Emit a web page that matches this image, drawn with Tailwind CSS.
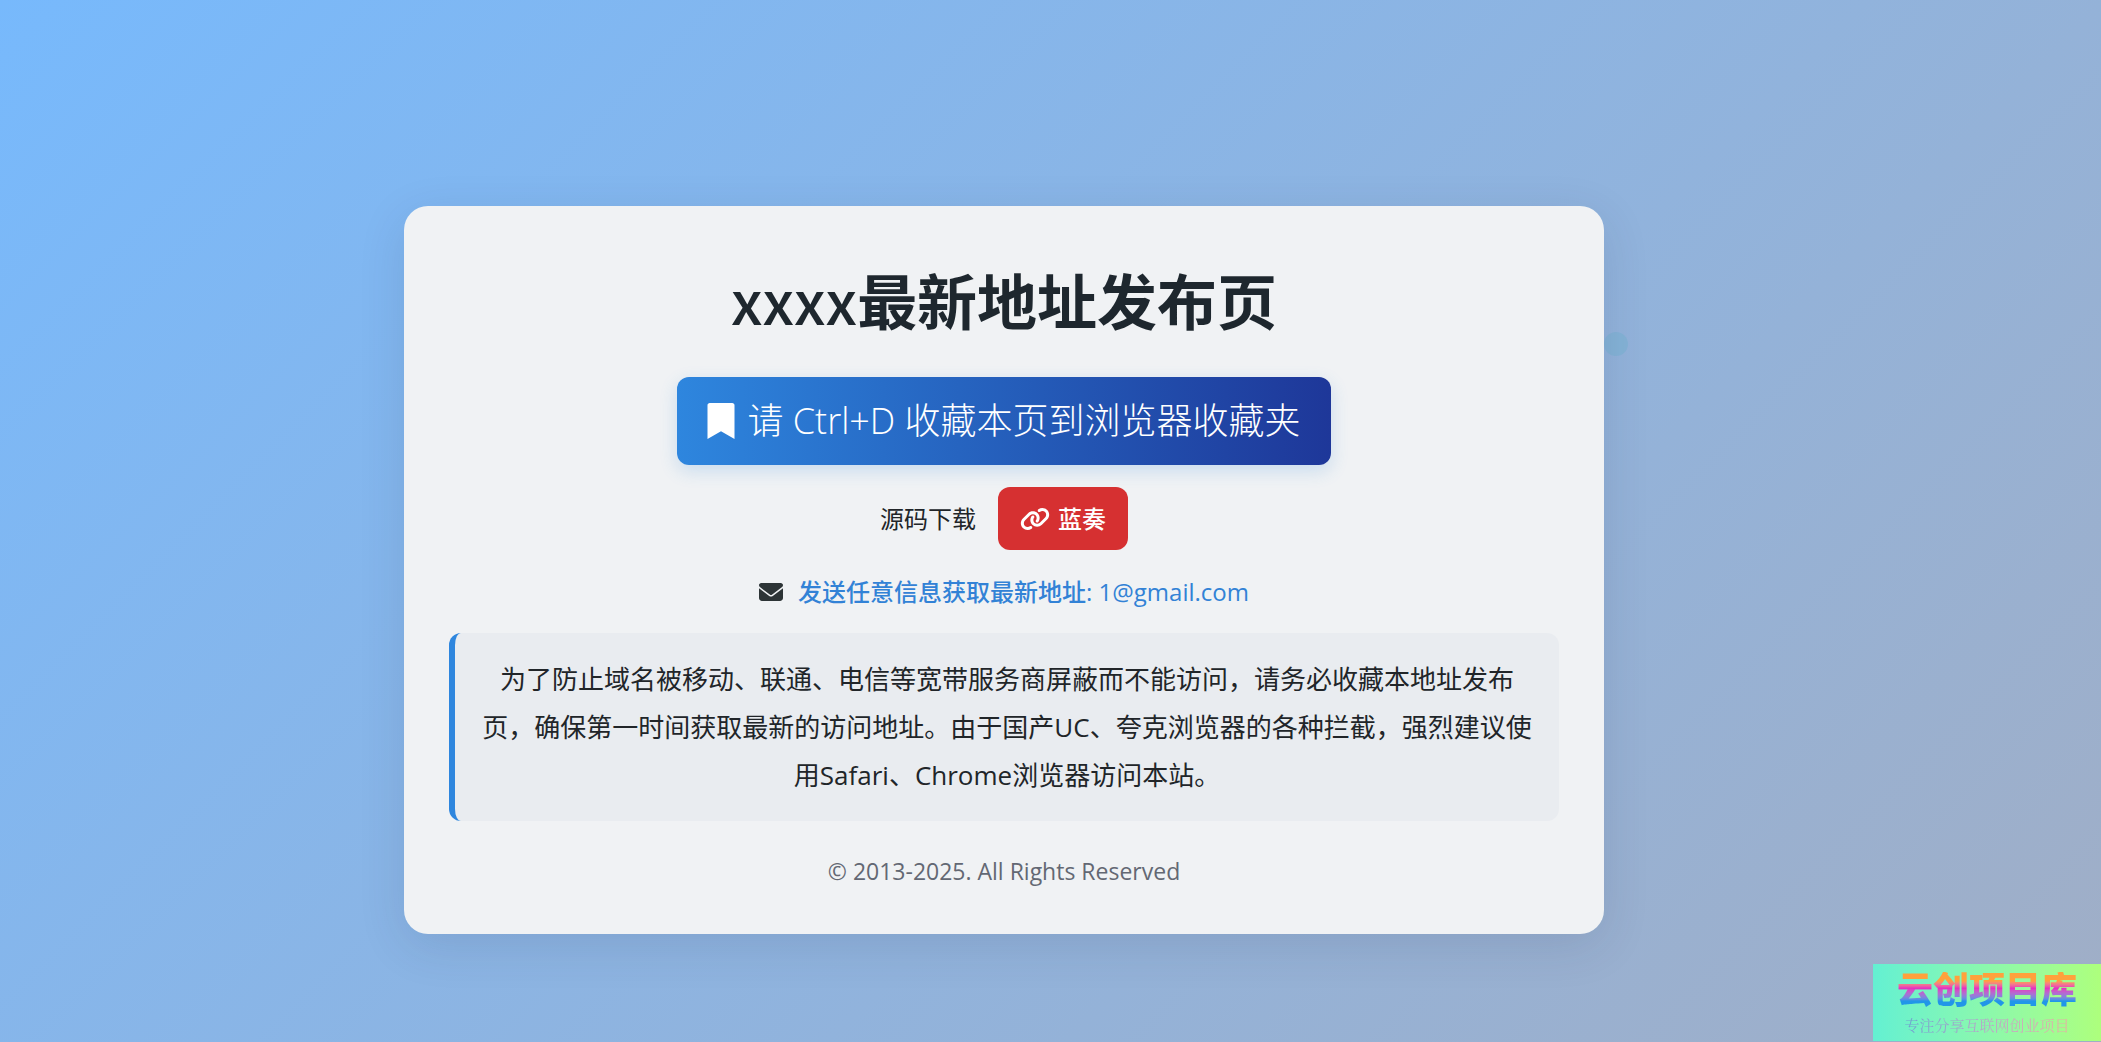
<!DOCTYPE html>
<html lang="zh-CN">

<head>
  <meta charset="UTF-8" />
  <meta name="viewport" content="width=device-width, initial-scale=1.0" />
  <title>xxxx最新地址发布页</title>
  <script src="https://cdn.jsdelivr.net/npm/@tailwindcss/browser@4"></script>
</head>

<body class="relative min-h-screen overflow-x-hidden bg-linear-135 from-[#77b9fc] to-[#a0aec6] pt-[206px] pr-[93px] pb-[108px] font-['Open_Sans','Noto_Sans_CJK_SC',sans-serif] text-2xl text-[#212529]">

  <!-- Floating particle -->
  <span class="absolute left-[1604px] top-[332px] size-6 rounded-full bg-[#84b2d6]"></span>

  <!-- Card -->
  <main class="relative mx-auto w-full max-w-[1200px] rounded-3xl bg-[#f0f2f4] p-[45px] text-center shadow-[0_12px_48px_rgba(31,38,75,0.12)]">
    <h1 class="mt-3 font-['Noto_Sans_CJK_SC',sans-serif] text-6xl font-bold leading-[72px] text-[#1e272e]"><span class="font-medium">xxxx</span>最新地址发布页</h1>

    <button type="button" class="mt-[42px] inline-flex h-[88px] items-center gap-3 rounded-xl bg-linear-to-r from-[#2e86de] to-[#1e3799] px-[30px] text-4xl font-light text-white shadow-[0_6px_18px_rgba(46,134,222,0.2)]">
      <svg class="h-9 w-7 shrink-0" viewBox="0 0 384 512" fill="currentColor" aria-hidden="true">
        <path d="M0 512V32C0 14 14 0 32 0h320c18 0 32 14 32 32v480L192 400 0 512z" />
      </svg>
      请 Ctrl+D 收藏本页到浏览器收藏夹
    </button>

    <div class="mt-[22px] flex items-center justify-center gap-[22px]">
      <span>源码下载</span>
      <a href="#" class="inline-flex h-[63px] items-center gap-2 rounded-xl bg-[#d63031] px-[22px] font-medium text-white">
        <svg class="h-6 w-[30px]" viewBox="0 0 640 512" fill="currentColor" aria-hidden="true">
          <path d="M579.800 267.700c56.500-56.500 56.500-148 0-204.500c-50-50-128.800-56.500-186.300-15.400l-1.600 1.100c-14.400 10.300-17.700 30.300-7.400 44.600s30.300 17.700 44.600 7.400l1.600-1.100c32.100-22.900 76-19.300 103.800 8.600c31.500 31.500 31.500 82.500 0 114L422.300 334.800c-31.500 31.500-82.500 31.500-114 0c-27.900-27.900-31.500-71.800-8.600-103.800l1.100-1.600c10.300-14.400 6.900-34.400-7.400-44.600s-34.400-6.900-44.600 7.400l-1.100 1.600C206.500 251.200 213 330 263 380c56.500 56.500 148 56.500 204.500 0L579.800 267.700zM60.200 244.300c-56.500 56.500-56.500 148 0 204.500c50 50 128.800 56.500 186.300 15.400l1.600-1.100c14.400-10.300 17.700-30.300 7.400-44.600s-30.300-17.700-44.600-7.400l-1.600 1.100c-32.100 22.900-76 19.300-103.800-8.600C74 372 74 321 105.500 289.500L217.700 177.200c31.500-31.500 82.500-31.500 114 0c27.900 27.900 31.500 71.800 8.600 103.900l-1.100 1.600c-10.300 14.400-6.900 34.400 7.400 44.600s34.400 6.900 44.600-7.400l1.100-1.600C433.500 260.800 427 182 377 132c-56.500-56.500-148-56.500-204.500 0L60.200 244.300z" />
        </svg>
        蓝奏
      </a>
    </div>

    <div class="mt-6 flex items-center justify-center gap-[15px]">
      <svg class="size-6" viewBox="0 0 512 512" fill="#2d3436" aria-hidden="true">
        <path d="M48 64C21.500 64 0 85.500 0 112c0 15.100 7.100 29.300 19.200 38.400L236.800 313.600c11.400 8.500 27 8.500 38.400 0L492.800 150.400c12.100-9.100 19.200-23.300 19.200-38.400c0-26.500-21.500-48-48-48H48zM0 176V384c0 35.300 28.700 64 64 64H448c35.300 0 64-28.700 64-64V176L294.400 339.200c-22.800 17.100-54 17.100-76.800 0L0 176z" />
      </svg>
      <a href="mailto:1@gmail.com" class="font-medium leading-9 text-[#3282d6]">发送任意信息获取最新地址: 1@gmail.com</a>
    </div>

    <p class="mt-[23px] rounded-xl border-l-6 border-[#2e86de] bg-[#e9ecf0] p-[22px] text-[26px] leading-[48px]">
      为了防止域名被移动、联通、电信等宽带服务商屏蔽而不能访问，请务必收藏本地址发布页，确保第一时间获取最新的访问地址。由于国产UC、夸克浏览器的各种拦截，强烈建议使用Safari、Chrome浏览器访问本站。
    </p>

    <footer class="mt-8 text-[23px] leading-9 text-[#636873]">© 2013-2025. All Rights Reserved</footer>
  </main>

  <!-- Site badge -->
  <aside class="fixed right-0 bottom-px flex h-[77px] w-[228px] flex-col items-center justify-between bg-linear-to-r from-[#63f0d2] to-[#adff7c] pt-2 pb-1">
    <strong class="bg-linear-to-b from-[#ffa13c] from-25% via-[#e62bc0] via-45% to-[#2196e8] to-80% bg-clip-text text-4xl font-black leading-9 text-transparent">云创项目库</strong>
    <span class="bg-linear-to-r from-[#6d9fd0] via-[#b9a6c8] to-[#e8b0a4] bg-clip-text font-['Noto_Serif_CJK_SC','Noto_Sans_CJK_SC',serif] text-[15px] leading-6 text-transparent">专注分享互联网创业项目</span>
  </aside>

</body>

</html>
